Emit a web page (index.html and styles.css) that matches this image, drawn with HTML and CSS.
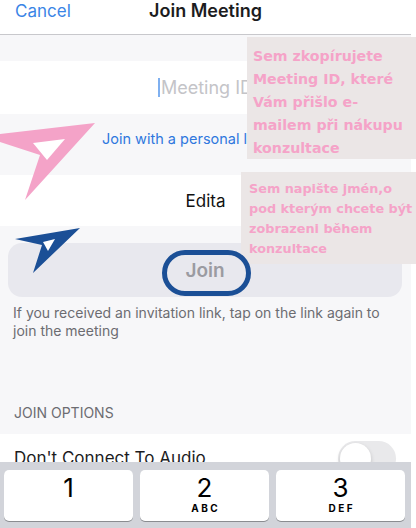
FILE: index.html
```html
<!DOCTYPE html>
<html lang="cs">
<head>
  <meta charset="UTF-8"/>
  <meta name="viewport" content="width=device-width, initial-scale=1"/>
  <title>Join Meeting</title>
  <link rel="stylesheet" href="styles.css">
</head>
<body>
  <div class="screen">
    <div class="content">
      <!-- Nav bar -->
      <div class="navbar">
        <span class="cancel">Cancel</span>
        <span class="title">Join Meeting</span>
      </div>

      <div class="spacer"></div>

      <div class="field-row">
        <span class="caret"></span><span class="placeholder">Meeting ID</span>
      </div>

      <div class="link-row">Join with a personal link name</div>

      <div class="field-row name-row">Edita</div>

      <div class="join-section">
        <div class="join-btn">Join</div>
        <p class="hint">If you received an invitation link, tap on the link again to join the meeting</p>
        <div class="section-label">JOIN OPTIONS</div>
      </div>

      <div class="option-row">
        <span>Don't Connect To Audio</span>
        <span class="toggle"><span class="knob"></span></span>
      </div>
    </div>

    <!-- Number pad -->
    <div class="keyboard">
      <div class="key"><span class="digit">1</span></div>
      <div class="key"><span class="digit">2</span><span class="letters">ABC</span></div>
      <div class="key"><span class="digit">3</span><span class="letters">DEF</span></div>
    </div>
  </div>

  <!-- annotations drawn over the screenshot -->
  <div class="note note-id">Sem zkopírujete<br>Meeting ID, které<br>Vám přišlo e-<br>mailem při nákupu<br>konzultace</div>
  <div class="note note-name">Sem napište jmén,o<br>pod kterým chcete být<br>zobrazeni během<br>konzultace</div>
  <div class="ring"></div>

  <svg class="arrows" width="416" height="528" viewBox="0 0 416 528">
    <polygon points="95,123 0,134 0,142 40,155 25,200" fill="#f4a3c8"/>
    <polygon points="33,143 65,139 47,160" fill="#ffffff"/>
    <polygon points="80,228 15,239 42,245 33,273" fill="#1b4f96"/>
    <polygon points="43,242 55,239 48,251" fill="#ffffff"/>
  </svg>
</body>
</html>
```

FILE: styles.css
```css
body{
  margin: 0;
  width: 416px;
  height: 528px;
  overflow: hidden;
  background: #ffffff;
  font-family: Inter, "Liberation Sans", sans-serif;
  color: #1c1c1e;
  position: relative;
}
.screen{
  width: 411px;
  height: 528px;
  display: flex;
  flex-direction: column;
}
.content{
  height: 462px;
  overflow: hidden;
  background: #f7f7f9;
}
.navbar{
  height: 34px;
  background: #fff;
  border-bottom: 1px solid #c8c8cc;
  display: flex;
  position: relative;
  font-size: 17px;
  line-height: 22px;
}
.cancel{
  color: #3a85e6;
  padding-left: 15px;
}
.title{
  position: absolute;
  left: 0;
  right: 0;
  text-align: center;
  font-size: 18px;
  font-weight: 600;
  pointer-events: none;
}
.spacer{
  height: 26px;
}
.field-row{
  height: 53px;
  background: #fff;
  display: flex;
  align-items: center;
  justify-content: center;
  font-size: 18px;
}
.caret{
  width: 2px;
  height: 19px;
  background: #7fb0f0;
  margin-right: 1px;
}
.placeholder{
  color: #c4c4c8;
}
.link-row{
  height: 61px;
  box-sizing: border-box;
  padding-top: 16px;
  text-align: center;
  font-size: 14.5px;
  line-height: 18px;
  color: #2f78de;
}
.name-row{
  height: 51px;
  font-size: 17px;
  color: #111;
}
.join-section{
  padding-top: 17px;
}
.join-btn{
  height: 54px;
  margin: 0 9px 0 8px;
  border-radius: 14px;
  background: #e8e8ee;
  display: flex;
  align-items: center;
  justify-content: center;
  font-size: 19px;
  font-weight: 600;
  color: #9b9ba1;
}
.hint{
  margin: 7px 0 0;
  padding: 0 13px;
  font-size: 14px;
  line-height: 18px;
  color: #6c6c71;
}
.section-label{
  margin-top: 65px;
  padding: 0 14px 13px;
  font-size: 14px;
  line-height: 16px;
  color: #6c6c71;
}
.option-row{
  background: #fff;
  padding: 13px 15px 0 14px;
  display: flex;
  justify-content: space-between;
  font-size: 17px;
  line-height: 22px;
  height: 40px;
}
.toggle{
  width: 58px;
  height: 35px;
  margin-top: -6px;
  border-radius: 18px;
  background: #e9e9eb;
  position: relative;
}
.knob{
  position: absolute;
  left: 2px;
  top: 2px;
  width: 31px;
  height: 31px;
  border-radius: 50%;
  background: #fff;
  box-shadow: 0 2px 4px rgba(0,0,0,0.18);
}
.keyboard{
  flex: 1;
  background: #d2d4da;
  display: grid;
  grid-template-columns: 1fr 1fr 1fr;
  gap: 7px;
  padding: 8px 6px 0 4px;
}
.key{
  height: 51px;
  background: #fff;
  border-radius: 5px;
  box-shadow: 0 1px 0 #8a8c90;
  display: flex;
  flex-direction: column;
  align-items: center;
  padding-top: 4px;
  box-sizing: border-box;
}
.digit{
  font-size: 26px;
  line-height: 28px;
  color: #000;
}
.letters{
  font-size: 10px;
  line-height: 13px;
  font-weight: 700;
  letter-spacing: 2.5px;
  margin-right: -2.5px;
  color: #000;
}
.note{
  position: absolute;
  background: #ebe6e6;
  color: #f5a3c8;
  font-family: "DejaVu Sans", Verdana, sans-serif;
  font-weight: 700;
  box-sizing: border-box;
  white-space: nowrap;
}
.note-id{
  left: 247px;
  top: 37px;
  width: 169px;
  height: 122px;
  padding: 8px 0 0 6px;
  font-size: 14.2px;
  line-height: 23px;
}
.note-name{
  left: 241px;
  top: 172px;
  width: 175px;
  height: 92px;
  padding: 7px 0 0 8px;
  font-size: 12.8px;
  line-height: 20px;
}
.ring{
  position: absolute;
  left: 162px;
  top: 250px;
  width: 89px;
  height: 46px;
  box-sizing: border-box;
  border: 5px solid #1b4f96;
  border-radius: 23px;
}
.arrows{
  position: absolute;
  left: 0;
  top: 0;
  pointer-events: none;
}
```
